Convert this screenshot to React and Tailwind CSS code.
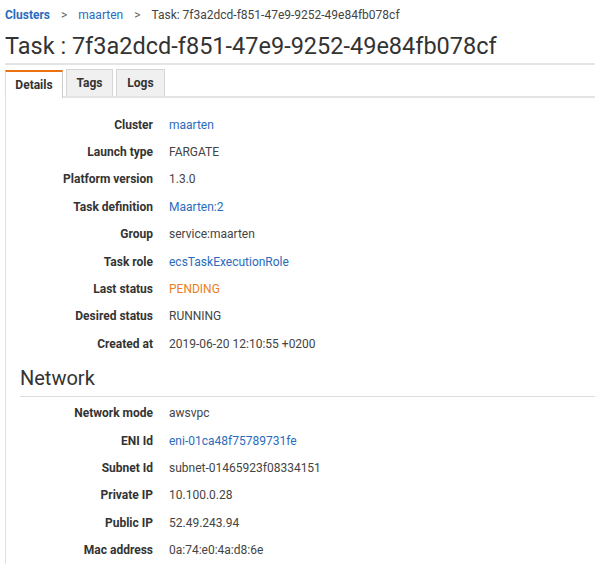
import React from 'react';

const taskRows = [
  { label: 'Cluster', value: 'maarten', kind: 'link' },
  { label: 'Launch type', value: 'FARGATE' },
  { label: 'Platform version', value: '1.3.0' },
  { label: 'Task definition', value: 'Maarten:2', kind: 'link' },
  { label: 'Group', value: 'service:maarten' },
  { label: 'Task role', value: 'ecsTaskExecutionRole', kind: 'link' },
  { label: 'Last status', value: 'PENDING', kind: 'warn' },
  { label: 'Desired status', value: 'RUNNING' },
  { label: 'Created at', value: '2019-06-20 12:10:55 +0200' },
];

const networkRows = [
  { label: 'Network mode', value: 'awsvpc' },
  { label: 'ENI Id', value: 'eni-01ca48f75789731fe', kind: 'link' },
  { label: 'Subnet Id', value: 'subnet-01465923f08334151' },
  { label: 'Private IP', value: '10.100.0.28' },
  { label: 'Public IP', value: '52.49.243.94' },
  { label: 'Mac address', value: '0a:74:e0:4a:d8:6e' },
];

const valueColor = {
  link: 'text-[#2a6bbd]',
  warn: 'text-[#e8801e]',
};

const Row = ({ label, value, kind }) => (
  <div className="flex h-[27.4px] items-center">
    <div className="w-[133px] text-right font-bold text-[#333]">{label}</div>
    <div className={`ml-4 ${valueColor[kind] || 'text-[#444]'}`}>{value}</div>
  </div>
);

const App = () => {
  return (
    <div className="min-h-screen w-full bg-white font-['Roboto',sans-serif] text-[12px] text-[#333]">
      {/* Breadcrumb */}
      <div className="flex h-[30px] items-center pl-[5px] text-[12px]">
        <a className="font-bold text-[#2a6bbd]">Clusters</a>
        <span className="mx-[11px] text-[#666]">&gt;</span>
        <a className="text-[#2a6bbd]">maarten</a>
        <span className="mx-[11px] text-[#666]">&gt;</span>
        <span className="text-[#444]">Task: 7f3a2dcd-f851-47e9-9252-49e84fb078cf</span>
      </div>

      {/* Title */}
      <h1 className="ml-[5px] flex h-[35px] items-center border-b-2 border-[#e4e4e4] pt-[1px] text-[23.5px] leading-none text-[#333]">
        Task : 7f3a2dcd-f851-47e9-9252-49e84fb078cf
      </h1>

      {/* Tabs */}
      <div className="mt-[5px] flex items-end pl-[5px]">
        <div className="flex h-[28px] w-[58px] items-center justify-center border-t-2 border-l border-r border-t-[#ec7211] border-l-[#ddd] border-r-[#ccc] bg-white font-bold text-[#333]">
          Details
        </div>
        <div className="flex h-[27px] flex-1 items-end gap-[3px] border-b-2 border-[#e4e4e4] pl-[3px]">
          <div className="flex h-[27px] w-[47px] items-center justify-center border border-b-0 border-[#d5d5d5] bg-[#f0f0f0] font-bold text-[#333]">
            Tags
          </div>
          <div className="flex h-[27px] w-[49px] items-center justify-center border border-b-0 border-[#d5d5d5] bg-[#f0f0f0] font-bold text-[#333]">
            Logs
          </div>
        </div>
      </div>

      {/* Panel */}
      <div className="ml-[5px] border-l border-[#e2e2e2] pl-[14px] pt-[13px]">
        {taskRows.map((r) => (
          <Row key={r.label} {...r} />
        ))}

        <div className="mt-[8px] border-b border-[#ddd] pb-[6px] text-[20px] leading-[24px] text-[#333]">
          Network
        </div>
        <div className="pt-[3px]">
          {networkRows.map((r) => (
            <Row key={r.label} {...r} />
          ))}
        </div>
      </div>
    </div>
  );
};

export default App;
